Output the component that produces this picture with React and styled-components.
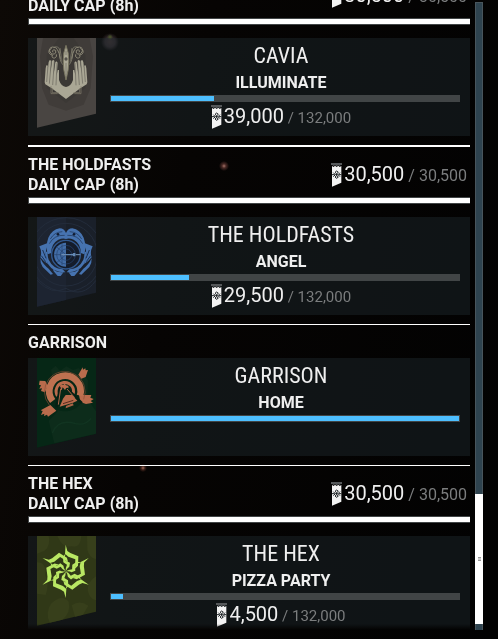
import React from "react";
import styled, { createGlobalStyle } from "styled-components";

const GlobalStyle = createGlobalStyle`
  * {
    box-sizing: border-box;
    margin: 0;
    padding: 0;
  }
  body {
    background: #030201;
    color: #efefef;
    font-family: Roboto, "Liberation Sans", sans-serif;
    overflow: hidden;
  }
`;

const Page = styled.main`
  display: flex;
  gap: 5px;
  height: 100vh;
  padding: 0 15px 9px 28px;
  background:
    radial-gradient(circle at 224px 166px, #a5746a 0, #4a2a26 2px, transparent 5px),
    radial-gradient(circle at 143px 468px, #a06a58 0, #3a1f18 2px, transparent 4px),
    radial-gradient(circle at 110px 37px, #4c5a2c 0, transparent 3px),
    radial-gradient(circle at 110px 42px, #3d3031 0, #30272a 5px, transparent 9px),
    linear-gradient(100deg, #0d0906 0, #060403 35%, #020202 100%);
`;

const Viewport = styled.div`
  flex: 1;
  min-width: 0;
  overflow: hidden;
  mask-image: linear-gradient(to top, transparent, #000 6px);
`;

// the list is scrolled down by part of its first heading
const List = styled.div`
  margin-top: -33px;
`;

const Section = styled.section`
  padding-bottom: 9px;
`;

const Head = styled.header`
  box-sizing: content-box;
  display: flex;
  justify-content: space-between;
  align-items: flex-start;
  height: ${({ $capped }) => ($capped ? "42px" : "25px")};
  padding: 8px 3px 0 0;
  border-top: ${({ $heavy }) => ($heavy ? "2px" : "1px")} solid #fff;

  h2 {
    font-size: 16px;
    font-weight: 700;
    line-height: 20px;
  }
`;

const Amount = styled.p`
  display: flex;
  align-items: center;
  justify-content: center;
  gap: 2px;
  line-height: 24px;
  font-size: 20px;
  white-space: pre;

  small {
    font-size: ${({ $large }) => ($large ? "16px" : "15px")};
    color: #7b7d7e;
  }
`;

const HeadAmount = styled(Amount)`
  padding-top: 7px;
`;

const Bar = styled.div`
  height: 7px;
  padding: 1px;
  background: #414546;
`;

const Fill = styled.div`
  height: 5px;
  background: ${({ $white }) => ($white ? "#fff" : "#4dbfff")};
`;

const CapBar = styled(Bar)`
  margin-bottom: 13px;
  padding-right: 0;
`;

const Card = styled.article`
  display: flex;
  gap: 14px;
  height: 98px;
  padding: 0 10px 0 9px;
  background: rgba(34, 46, 51, 0.42);
`;

const Banner = styled.svg`
  flex: none;
  width: 59px;
  height: 90px;
`;

const Standing = styled.div`
  flex: 1;
  min-width: 0;
  padding-top: 6px;
  text-align: center;

  h3 {
    padding-right: 8px;
    font-family: "Roboto Condensed", Roboto, sans-serif;
    font-size: 22px;
    font-weight: 400;
    line-height: 24px;
  }
  h4 {
    margin: 5px 0 2px;
    padding-right: 8px;
    font-size: 16px;
    font-weight: 700;
    line-height: 20px;
  }
  ${Amount} {
    padding: 2px 8px 0 0;
  }
`;

const Track = styled.div`
  display: flex;
  flex-direction: column;
  width: 8px;
  margin-top: 2px;
  background: #2e434f;
  border: solid #48555c;
  border-width: 1px 1px 0;
`;

const Space = styled.div`
  flex: ${({ $size }) => $size} 0 0;
`;

const Thumb = styled.div`
  display: flex;
  align-items: center;
  justify-content: center;
  flex: 130 0 0;
  margin: 0 -1px;
  background: #fff;

  span {
    width: 3px;
    height: 4px;
    border: solid #999;
    border-width: 1px 0;
    background: #ccc;
  }
`;

const StandingMark = () => (
  <svg width="11" height="24" viewBox="0 0 33 72" aria-hidden="true">
    <path d="M0 0H33V6H29L26 9L22 6L17 10L12 6L8 9L4 6H0Z" fill="#55585a" />
    <path d="M3 9L8 12L12 8L17 12L22 8L26 12L31 9V59L3 71Z" fill="#f3f3f3" />
    <g fill="none" stroke="#1b2023" strokeWidth="3">
      <path d="M17 24l5 4-5 4-5-4zM17 38l5 4-5 4-5-4zM7 29l6 6-6 6M27 29l-6 6 6 6M3 35h8M23 35h8" />
    </g>
    <circle cx="17" cy="35" r="3" fill="#1b2023" />
  </svg>
);

const SHAPE = "M0 0H177V227L0 269Z";

const CaviaHalf = () => (
  <g>
    <path
      fill="#aaa795"
      d="M23 133L26 91L28 82L33 83L31 104L35 72L38 66L43 68L40 105L45 70L48 65L52 68L50 109L55 73L58 70L62 74L59 112L62 96L66 96L66 126Q72 145 87 147V183L44 151L25 139Z"
    />
    <path d="M33 83L29 132M43 70L37 137M52 70L47 141M60 75L57 142" stroke="#67645b" strokeWidth="2" fill="none" />
    <path d="M46 150V164H65M42 144V167H62" stroke="#85816f" strokeWidth="2" fill="none" />
    <g fill="none" stroke="#8d8977" strokeWidth="3">
      <path d="M70 62Q64 25 47 27Q34 29 39 42Q47 53 56 45Q59 35 50 35Q44 39 48 43" />
      <path d="M44 31Q32 36 36 44Q39 51 46 51Q43 61 53 60Q61 57 58 49" />
      <path d="M73 71Q73 30 61 27Q55 25 50 29M77 80Q63 62 70 31" strokeWidth="2" />
    </g>
  </g>
);

const CaviaBanner = () => (
  <Banner viewBox="0 0 177 270" aria-hidden="true">
    <path d={SHAPE} fill="#494542" />
    <path d="M18 0L9 55L15 150L35 200L87 218L140 200L161 150L168 55L158 0Z" fill="#403c39" />
    <path d="M66 0H110L145 50V150L87 195L29 150V50Z" fill="#3b3835" />
    <CaviaHalf />
    <g transform="translate(174 0) scale(-1 1)">
      <CaviaHalf />
    </g>
    <path d="M87 22Q70 64 87 126Q104 64 87 22Z" fill="#aaa795" stroke="#77745f" strokeWidth="3" />
    <path d="M87 38V51M87 75V112" stroke="#6e6b5d" strokeWidth="2" />
    <circle cx="87" cy="63" r="5" fill="#55524b" />
  </Banner>
);

const HoldfastHalf = () => (
  <g fill="#4673b0">
    <path d="M87 48Q82 34 68 34Q45 38 34 62Q25 88 32 112L43 108Q42 80 64 68Q78 62 87 66Z" />
    <path d="M32 78L7 88Q16 105 10 121Q18 132 33 141Q21 109 31 88Z" />
    <path d="M10 124Q20 145 35 155L48 171L41 173L17 150Q9 138 10 124Z" />
    <path d="M32 104Q31 118 35 128Q47 154 77 157L85 166Q49 167 33 141Q25 125 27 104Z" />
    <path d="M47 155Q61 168 80 165L71 177H62L50 163Z" />
    <path d="M40 66Q52 45 76 44M37 80Q52 53 83 55" fill="none" stroke="#1d3150" strokeWidth="2" />
    <circle cx="63" cy="52" r="4" fill="#101b30" />
    <path d="M13 116L26 134M17 99L27 124" stroke="#1d3150" strokeWidth="3" />
  </g>
);

const HoldfastsBanner = () => (
  <Banner viewBox="0 0 177 270" aria-hidden="true">
    <path d={SHAPE} fill="#1a202a" />
    <path d="M0 0H87V249L0 269Z" fill="#1d2431" />
    <g fill="none" stroke="#232c3b" strokeWidth="3">
      <circle cx="87" cy="113" r="94" />
      <circle cx="87" cy="113" r="111" />
      <path d="M0 190Q45 237 87 214Q137 245 177 190" />
    </g>
    <HoldfastHalf />
    <g transform="translate(174 0) scale(-1 1)">
      <HoldfastHalf />
    </g>
    <circle cx="87" cy="113" r="43" fill="#141c2b" stroke="#31588f" strokeWidth="4" />
    <path d="M87 77A36 36 0 0 0 87 149Z" fill="#426da7" />
    <g fill="none" stroke="#25436e" strokeWidth="2">
      <circle cx="87" cy="113" r="28" />
      <circle cx="87" cy="113" r="17" />
      <path d="M50 113H87M59 90L87 113L60 136M75 82V145" />
    </g>
    <path d="M87 111H106L109 108H115V118H109L106 115H87Z" fill="#6389b5" />
    <path d="M116 113H130M73 113H87" stroke="#7899bd" strokeWidth="3" />
  </Banner>
);

const GarrisonBanner = () => (
  <Banner viewBox="0 0 177 270" aria-hidden="true">
    <path d={SHAPE} fill="#062716" />
    <path d="M42 35L56 23L69 39L88 25L108 36L126 30L153 67L151 123L177 160V227L52 256L35 189L62 160Z" fill="#0d2c1b" />
    <g fill="none" stroke="#113421" strokeWidth="4">
      <path d="M46 225Q63 181 116 197Q146 203 162 181" />
    </g>
    <circle cx="84" cy="100" r="60" fill="#062716" />
    <g fill="#b96b4c">
      <path d="M124 50L137 28L138 35L145 31L146 37L153 36L146 57L133 62Z" />
      <path d="M8 68L25 69L32 84L24 103L12 99L15 91L7 92L12 82L6 80Z" />
      <path d="M40 141L58 158L33 176L30 170L21 174L22 167L12 171L17 159L11 157Z" />
      <path d="M126 111L163 111L160 119L170 123L161 129L168 134L147 138L130 132Z" />
    </g>
    <path d="M47 129A47 47 0 1 1 129 113" fill="none" stroke="#bd7150" strokeWidth="20" />
    <path d="M37 141A61 61 0 1 1 140 124" fill="none" stroke="#884f37" strokeWidth="2" />
    <path d="M62 114A26 26 0 1 1 108 108" fill="none" stroke="#b96b4c" strokeWidth="9" />
    <path d="M68 97L70 79L79 81L82 75L87 82L94 83L95 94L88 89L84 96L77 88L74 96Z" fill="#b96b4c" />
    <path d="M69 88L58 148M90 91L135 135" stroke="#052013" strokeWidth="7" />
    <path d="M71 92L64 140M90 93L113 119" stroke="#ad6749" strokeWidth="3" />
    <path d="M78 122L86 111H105L121 128L108 134L83 142L68 146Z" fill="#b96b4c" />
    <path d="M87 144L107 136L110 142L86 151Z" fill="#a76245" />
    <path d="M78 137L109 127" stroke="#572d20" strokeWidth="3" />
  </Banner>
);

const HexBanner = () => (
  <Banner viewBox="0 0 177 270" aria-hidden="true">
    <path d={SHAPE} fill="#303817" />
    <g fill="#373f1b">
      <path d="M0 0H35Q42 28 23 44L0 53ZM61 0H133Q130 38 104 31Q78 39 61 0ZM150 0H177V70Q156 64 151 41Z" />
      <path d="M0 79Q29 79 25 118Q38 146 26 177L0 173ZM177 121Q151 138 152 163Q158 191 177 193Z" />
      <path d="M42 203Q75 172 95 197Q103 229 76 251L38 260Q24 230 42 203ZM104 208Q128 191 154 209L138 236L114 242Z" />
    </g>
    <g transform="translate(86 106)" fill="#b9e763">
      {[0, 60, 120, 180, 240, 300].map((angle) => (
        <g key={angle} transform={`rotate(${angle})`}>
          <path d="M0 -80L5 -61L14 -55L38 -45L37 -17L28 -8L29 -36L8 -44L-2 -53Z" />
          <path d="M0 -54L-3 -42L0 -32L13 -26L11 -14Q5 -11 0 0Q-1 -10 4 -20L-7 -27L-8 -43Z" />
        </g>
      ))}
    </g>
  </Banner>
);

const syndicates = [
  { name: "CAVIA", rank: "ILLUMINATE", cap: [30500, 30500], standing: [39000, 132000], Emblem: CaviaBanner },
  { name: "THE HOLDFASTS", rank: "ANGEL", cap: [30500, 30500], standing: [29500, 132000], Emblem: HoldfastsBanner, heavy: true },
  { name: "GARRISON", rank: "HOME", Emblem: GarrisonBanner },
  { name: "THE HEX", rank: "PIZZA PARTY", cap: [30500, 30500], standing: [4500, 132000], Emblem: HexBanner },
];

const format = (n) => n.toLocaleString("en-US");
const percent = ([value, max]) => `${(value / max) * 100}%`;

const Value = ({ value: [current, max] }) => (
  <>
    <StandingMark />
    <span>
      {format(current)}
      <small> / {format(max)}</small>
    </span>
  </>
);

const Syndicate = ({ name, rank, cap, standing, Emblem, heavy }) => (
  <Section>
    <Head $capped={!!cap} $heavy={heavy}>
      <h2>
        {name}
        {cap && (
          <>
            <br />
            DAILY CAP (8h)
          </>
        )}
      </h2>
      {cap && (
        <HeadAmount $large>
          <Value value={cap} />
        </HeadAmount>
      )}
    </Head>
    {cap && (
      <CapBar>
        <Fill $white style={{ width: percent(cap) }} />
      </CapBar>
    )}
    <Card>
      <Emblem />
      <Standing>
        <h3>{name}</h3>
        <h4>{rank}</h4>
        <Bar>
          <Fill style={{ width: standing ? percent(standing) : "100%" }} />
        </Bar>
        {standing && (
          <Amount>
            <Value value={standing} />
          </Amount>
        )}
      </Standing>
    </Card>
  </Section>
);

export default function App() {
  return (
    <>
      <GlobalStyle />
      <Page>
        <Viewport>
          <List>
            {syndicates.map((s) => (
              <Syndicate key={s.name} {...s} />
            ))}
          </List>
        </Viewport>
        <Track>
          <Space $size={491} />
          <Thumb>
            <span />
          </Thumb>
          <Space $size={6} />
        </Track>
      </Page>
    </>
  );
}
